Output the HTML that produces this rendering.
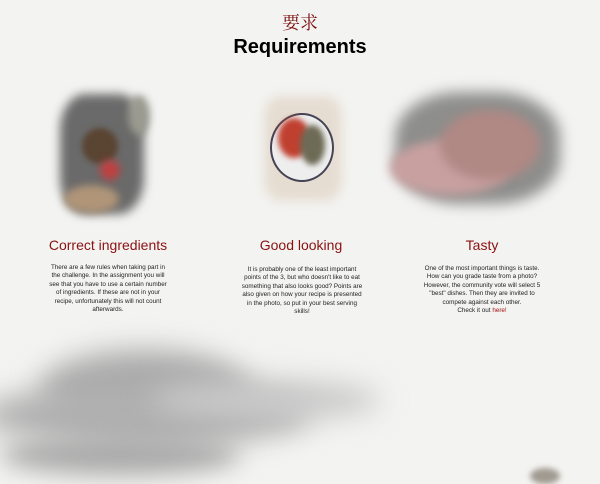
<!DOCTYPE html>
<html><head><meta charset="utf-8"><style>
body{margin:0;width:600px;height:478px;overflow:hidden;background:#f3f3f1;font-family:"Liberation Sans",sans-serif;position:relative}
.a{position:absolute}
.cn{left:0;width:600px;top:9px;text-align:center;font:18px "Noto Serif CJK SC",serif;color:#7d1414}
.h1{left:0;width:600px;top:36px;text-align:center;font-weight:bold;font-size:20px;color:#000}
.h{font-size:14px;color:#8a1212;text-align:center;width:200px;top:237px}
.p{font-size:6.3px;line-height:8.4px;color:#222;text-align:center;top:264px}
.b{border-radius:50%;filter:blur(5px)}
</style></head><body>
<div class="a cn">要求</div>
<div class="a h1">Requirements</div>

<div class="a b" style="left:60px;top:94px;width:84px;height:120px;background:#6a6a6a;border-radius:30%"></div>
<div class="a b" style="left:82px;top:128px;width:36px;height:36px;background:#5a4432;filter:blur(3px)"></div>
<div class="a b" style="left:64px;top:185px;width:55px;height:28px;background:#b09578;filter:blur(4px)"></div>
<div class="a b" style="left:128px;top:95px;width:22px;height:40px;background:#9a9a90;filter:blur(4px)"></div>
<div class="a b" style="left:100px;top:160px;width:20px;height:20px;background:#c04040;filter:blur(4px)"></div>

<div class="a b" style="left:264px;top:96px;width:78px;height:105px;background:#e6ddd2;border-radius:20%"></div>
<div class="a" style="left:270px;top:113px;width:60px;height:65px;border-radius:50%;background:#eee;border:2px solid #445"></div>
<div class="a b" style="left:278px;top:118px;width:32px;height:40px;background:#c04030;filter:blur(3px)"></div>
<div class="a b" style="left:300px;top:125px;width:25px;height:40px;background:#6d6a55;filter:blur(3px)"></div>

<div class="a b" style="left:395px;top:92px;width:165px;height:112px;background:#8e8e8c;border-radius:40%;filter:blur(7px)"></div>
<div class="a b" style="left:390px;top:140px;width:120px;height:55px;background:#c8a0a0;filter:blur(5px)"></div>
<div class="a b" style="left:440px;top:110px;width:100px;height:70px;background:#b08884;filter:blur(5px)"></div>

<div class="a h" style="left:8px">Correct ingredients</div>
<div class="a h" style="left:201px">Good looking</div>
<div class="a h" style="left:382px">Tasty</div>
<div class="a p" style="left:48px;width:120px;top:264px">There are a few rules when taking part in the challenge. In the assignment you will see that you have to use a certain number of ingredients. If these are not in your recipe, unfortunately this will not count afterwards.</div>
<div class="a p" style="left:240px;width:124px;top:266px">It is probably one of the least important points of the 3, but who doesn't like to eat something that also looks good? Points are also given on how your recipe is presented in the photo, so put in your best serving skills!</div>
<div class="a p" style="left:420px;width:124px;top:265px">One of the most important things is taste. How can you grade taste from a photo? However, the community vote will select 5 "best" dishes. Then they are invited to compete against each other.<br>Check it out <span style="color:#a01010">here!</span></div>

<div class="a b" style="left:40px;top:350px;width:210px;height:80px;background:#aaa;filter:blur(14px)"></div>
<div class="a b" style="left:-20px;top:385px;width:330px;height:60px;background:#b0b0b0;filter:blur(14px)"></div>
<div class="a b" style="left:150px;top:380px;width:230px;height:40px;background:#c8c8c8;filter:blur(14px)"></div>
<div class="a b" style="left:0px;top:435px;width:240px;height:40px;background:#aaa;filter:blur(12px)"></div>
<div class="a b" style="left:530px;top:468px;width:30px;height:16px;background:#a09a90;filter:blur(3px)"></div>
</body></html>
